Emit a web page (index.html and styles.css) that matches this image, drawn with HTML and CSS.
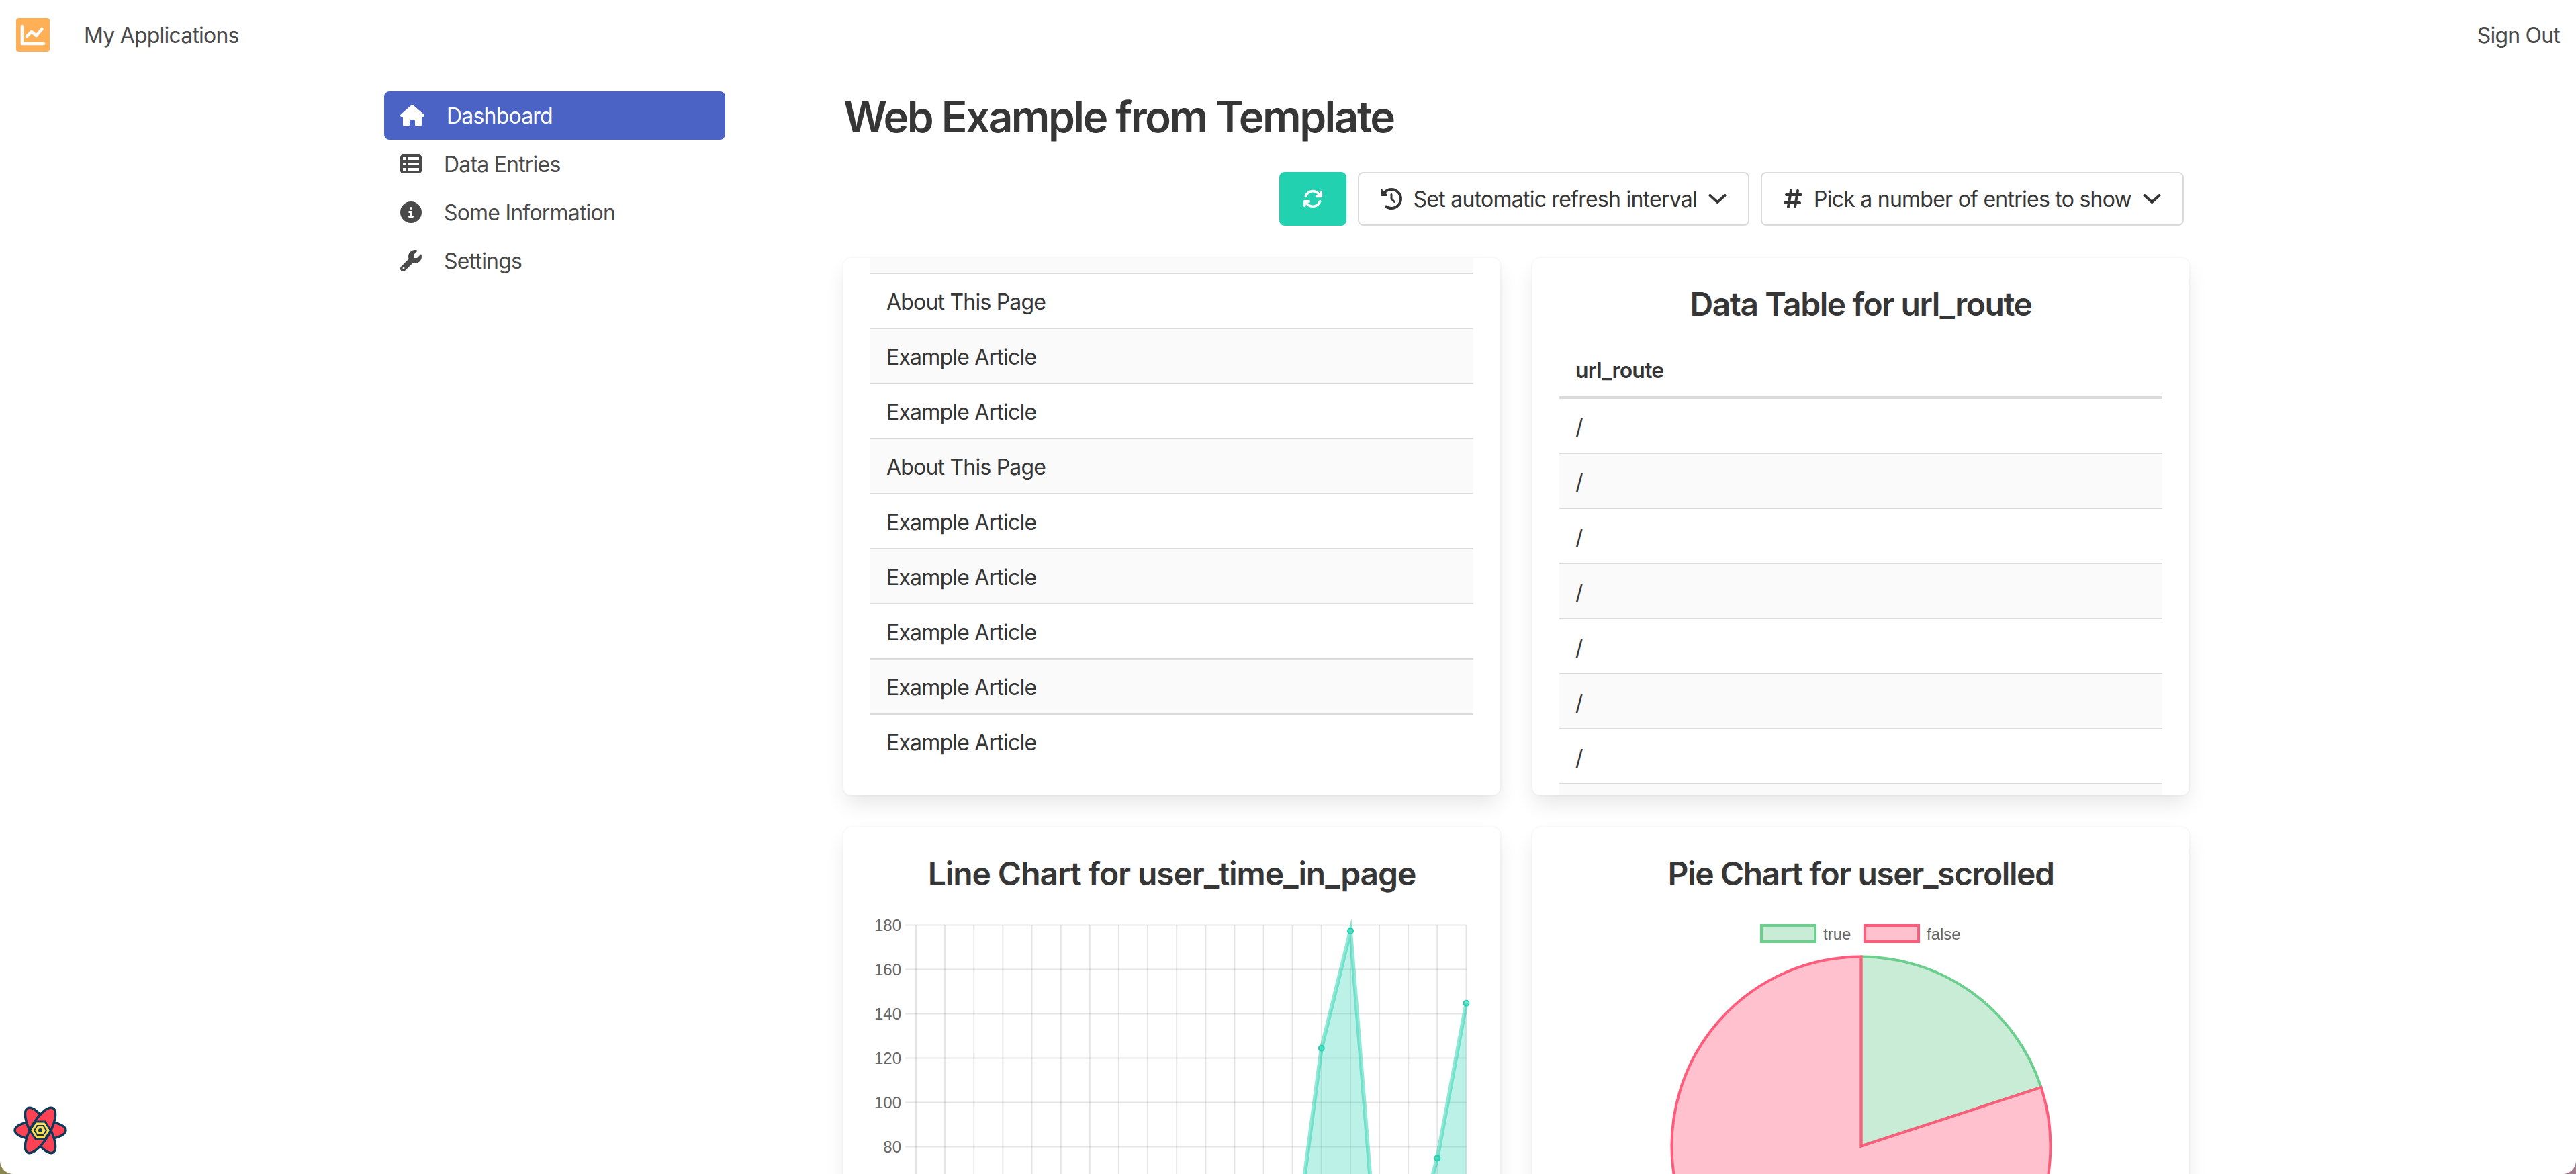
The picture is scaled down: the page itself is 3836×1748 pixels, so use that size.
FILE: index.html
```html
<!DOCTYPE html>
<html lang="en">
<head>
    <meta charset="UTF-8">
    <title>Web Example from Template</title>
    <link rel="stylesheet" href="styles.css">
</head>
<body>
<div class="app">
    <!-- Top bar -->
    <nav class="navbar">
        <div class="navbar-brand">
            <svg class="logo" viewBox="0 0 50 50">
                <rect width="50" height="50" rx="4" fill="#ffb057"/>
                <path d="M9 12V38H41" fill="none" stroke="#fff" stroke-width="4.5" stroke-linecap="round" stroke-linejoin="round"/>
                <path d="M16 27L23 20L30 26L38.500 16" fill="none" stroke="#fff" stroke-width="4.500" stroke-linecap="round" stroke-linejoin="round"/>
            </svg>
            <span>My Applications</span>
        </div>
        <span>Sign Out</span>
    </nav>

    <div class="layout">
        <!-- Sidebar -->
        <aside class="sidebar">
            <a class="menu-item active">
                <svg class="icon" viewBox="0 0 576 512"><path d="M575.8 255.5c0 18-15 32.1-32 32.1h-32l.7 160.2c0 2.7-.2 5.4-.5 8.1V472c0 22.1-17.9 40-40 40H456c-1.1 0-2.2 0-3.3-.1c-1.4 .1-2.8 .1-4.2 .1H416 392c-22.1 0-40-17.9-40-40V448 384c0-17.7-14.3-32-32-32H256c-17.7 0-32 14.3-32 32v64 24c0 22.1-17.9 40-40 40H160 128.1c-1.5 0-3-.1-4.5-.2c-1.2 .1-2.4 .2-3.6 .2H104c-22.1 0-40-17.9-40-40V360c0-.9 0-1.9 .1-2.8V287.6H32c-18 0-32-14-32-32.1c0-9 3-17 10-24L266.4 8c7-7 15-8 22-8s15 2 21 7L564.8 231.500c8 7 12 15 11 24z"/></svg>
                <span>Dashboard</span>
            </a>
            <a class="menu-item">
                <svg class="icon" viewBox="0 0 512 512"><path d="M0 96C0 60.7 28.7 32 64 32H448c35.3 0 64 28.7 64 64V416c0 35.3-28.7 64-64 64H64c-35.3 0-64-28.7-64-64V96zm64 0v64h64V96H64zm384 0H192v64H448V96zM64 224v64h64V224H64zm384 0H192v64H448V224zM64 352v64h64V352H64zm384 0H192v64H448V352z"/></svg>
                <span>Data Entries</span>
            </a>
            <a class="menu-item">
                <svg class="icon" viewBox="0 0 512 512"><path d="M256 512A256 256 0 1 0 256 0a256 256 0 1 0 0 512zM216 336h24V272H216c-13.3 0-24-10.7-24-24s10.7-24 24-24h48c13.3 0 24 10.7 24 24v88h8c13.3 0 24 10.7 24 24s-10.7 24-24 24H216c-13.3 0-24-10.7-24-24s10.7-24 24-24zm40-208a32 32 0 1 1 0 64 32 32 0 1 1 0-64z"/></svg>
                <span>Some Information</span>
            </a>
            <a class="menu-item">
                <svg class="icon" viewBox="0 0 512 512"><path d="M352 320c88.400 0 160-71.600 160-160c0-15.300-2.200-30.100-6.200-44.200c-3.100-10.800-16.400-13.200-24.300-5.300l-76.800 76.800c-3 3-7.100 4.700-11.300 4.700H336c-8.800 0-16-7.200-16-16V118.600c0-4.200 1.700-8.300 4.700-11.300l76.800-76.800c7.900-7.900 5.400-21.200-5.300-24.300C382.100 2.200 367.300 0 352 0C263.600 0 192 71.600 192 160c0 19.100 3.400 37.500 9.500 54.500L19.900 396.100C7.200 408.800 0 426.100 0 444.100C0 481.600 30.400 512 67.900 512c18 0 35.300-7.200 48-19.900L297.500 310.500c17 6.200 35.400 9.500 54.500 9.500zM80 408a24 24 0 1 1 0 48 24 24 0 1 1 0-48z"/></svg>
                <span>Settings</span>
            </a>
        </aside>

        <main class="main">
            <h1 class="page-title">Web Example from Template</h1>

            <div class="toolbar">
                <button class="btn btn-refresh">
                    <svg class="icon-sm" viewBox="0 0 512 512"><path d="M105.100 202.600c7.700-21.800 20.200-42.300 37.800-59.800c62.500-62.500 163.800-62.500 226.300 0L386.300 160H352c-17.700 0-32 14.300-32 32s14.300 32 32 32H463.500c0 0 0 0 0 0h.4c17.700 0 32-14.300 32-32V80c0-17.700-14.300-32-32-32s-32 14.300-32 32v35.200L414.400 97.600c-87.500-87.500-229.300-87.500-316.800 0C73.200 122 55.600 150.700 44.800 181.400c-5.900 16.700 2.900 34.900 19.500 40.800s34.900-2.900 40.800-19.500zM39 289.300c-5 1.500-9.800 4.200-13.700 8.200c-4 4-6.700 8.800-8.100 14c-.3 1.200-.6 2.500-.8 3.800c-.3 1.700-.4 3.400-.4 5.100V432c0 17.700 14.300 32 32 32s32-14.300 32-32V396.900l17.600 17.500 0 0c87.500 87.400 229.300 87.400 316.700 0c24.400-24.400 42.100-53.100 52.900-83.700c5.900-16.700-2.900-34.900-19.500-40.800s-34.900 2.900-40.800 19.500c-7.700 21.800-20.200 42.300-37.800 59.800c-62.500 62.500-163.800 62.500-226.300 0l-.1-.1L125.600 352H160c17.700 0 32-14.300 32-32s-14.300-32-32-32H48.400c-1.600 0-3.200 .1-4.800 .3s-3.100 .5-4.600 1z"/></svg>
                </button>
                <button class="btn">
                    <svg class="icon-sm" viewBox="0 0 512 512"><path d="M75 75L41 41C25.900 25.900 0 36.600 0 57.900V168c0 13.300 10.700 24 24 24H134.100c21.400 0 32.100-25.900 17-41l-30.800-30.800C155 85.500 203 64 256 64c106 0 192 86 192 192s-86 192-192 192c-40.800 0-78.600-12.700-109.700-34.400c-14.500-10.100-34.400-6.600-44.600 7.900s-6.600 34.400 7.900 44.600C151.200 495 201.700 512 256 512c141.400 0 256-114.600 256-256S397.400 0 256 0C185.300 0 121.300 28.700 75 75zm181 53c-13.300 0-24 10.700-24 24V256c0 6.400 2.500 12.500 7 17l72 72c9.400 9.400 24.600 9.400 33.900 0s9.400-24.600 0-33.900l-65-65V152c0-13.300-10.700-24-24-24z"/></svg>
                    <span>Set automatic refresh interval</span>
                    <svg class="chevron" viewBox="0 0 27 14"><path d="M2.500 2L13.500 12L24.500 2"/></svg>
                </button>
                <button class="btn">
                    <svg class="icon-hash" viewBox="0 0 448 512"><path d="M181.300 32.400c17.400 2.900 29.200 19.400 26.300 36.800L197.800 128h95.100l11.500-69.300c2.900-17.400 19.400-29.200 36.800-26.300s29.200 19.400 26.300 36.800L357.800 128H416c17.700 0 32 14.300 32 32s-14.300 32-32 32H347.100L325.800 320H384c17.700 0 32 14.300 32 32s-14.300 32-32 32H315.100l-11.500 69.300c-2.900 17.400-19.400 29.200-36.800 26.300s-29.200-19.400-26.300-36.800l9.800-58.700H155.100l-11.500 69.300c-2.900 17.400-19.400 29.200-36.800 26.300s-29.200-19.400-26.300-36.800L90.200 384H32c-17.700 0-32-14.300-32-32s14.300-32 32-32h68.900l21.300-128H64c-17.700 0-32-14.300-32-32s14.300-32 32-32h68.900l11.500-69.300c2.900-17.400 19.400-29.200 36.800-26.300zM187.100 192L165.800 320h95.100l21.300-128H187.100z"/></svg>
                    <span>Pick a number of entries to show</span>
                    <svg class="chevron" viewBox="0 0 27 14"><path d="M2.500 2L13.500 12L24.500 2"/></svg>
                </button>
            </div>

            <div class="cards">
                <!-- Scrolled to the end of the list -->
                <section class="card card-scrolled">
                    <table class="table">
                        <tbody>
                            <tr><td>&nbsp;</td></tr>
                            <tr><td>About This Page</td></tr>
                            <tr><td>Example Article</td></tr>
                            <tr><td>Example Article</td></tr>
                            <tr><td>About This Page</td></tr>
                            <tr><td>Example Article</td></tr>
                            <tr><td>Example Article</td></tr>
                            <tr><td>Example Article</td></tr>
                            <tr><td>Example Article</td></tr>
                            <tr><td>Example Article</td></tr>
                        </tbody>
                    </table>
                </section>

                <section class="card">
                    <h2 class="card-title">Data Table for url_route</h2>
                    <table class="table table-route">
                        <thead>
                            <tr><th>url_route</th></tr>
                        </thead>
                        <tbody>
                            <tr><td>/</td></tr>
                            <tr><td>/</td></tr>
                            <tr><td>/</td></tr>
                            <tr><td>/</td></tr>
                            <tr><td>/</td></tr>
                            <tr><td>/</td></tr>
                            <tr><td>/</td></tr>
                            <tr><td>&nbsp;</td></tr>
                        </tbody>
                    </table>
                </section>

                <section class="card">
                    <h2 class="card-title title-wide">Line Chart for user_time_in_page</h2>
                    <svg class="chart" viewBox="0 0 898 400">
                        <path class="grid" d="M68 19.600V520M111.100 19.600V520M154.300 19.600V520M197.400 19.600V520M240.500 19.600V520M283.700 19.600V520M326.800 19.600V520M369.900 19.600V520M413 19.600V520M456.200 19.600V520M499.300 19.600V520M542.400 19.600V520M585.600 19.600V520M628.700 19.600V520M671.800 19.600V520M715 19.600V520M758.100 19.600V520M801.200 19.600V520M844.300 19.600V520M887.500 19.600V520"/>
                        <path class="grid" d="M52 19.600H887.500M52 85.600H887.500M52 151.600H887.500M52 217.600H887.500M52 283.600H887.500M52 349.600H887.500"/>
                        <g class="tick">
                            <text x="46" y="28">180</text>
                            <text x="46" y="94">160</text>
                            <text x="46" y="160">140</text>
                            <text x="46" y="226">120</text>
                            <text x="46" y="292">100</text>
                            <text x="46" y="358">80</text>
                        </g>
                        <path class="area" d="M628.700 613.600L628.700 528L671.800 202.700L715 28L758.100 565L801.200 526L844.300 366.400L887.500 135.700L887.500 613.600Z"/>
                        <path class="line" d="M628.700 528L671.800 202.700L715 28L758.100 565L801.200 526L844.300 366.400L887.500 135.700"/>
                        <circle class="point" cx="671.800" cy="202.700" r="4"/>
                        <circle class="point" cx="715" cy="28" r="4"/>
                        <circle class="point" cx="844.300" cy="366.400" r="4"/>
                        <circle class="point" cx="887.500" cy="135.700" r="4"/>
                    </svg>
                </section>

                <section class="card">
                    <h2 class="card-title">Pie Chart for user_scrolled</h2>
                    <svg class="chart" viewBox="0 0 898 400">
                        <rect class="slice-true" x="301" y="20" width="80" height="24"/>
                        <text class="legend" x="393" y="41">true</text>
                        <rect class="slice-false" x="455" y="20" width="80" height="24"/>
                        <text class="legend" x="547" y="41">false</text>
                        <path class="slice-true" d="M449.500 348.500V66.500A282 282 0 0 1 717.500 260.900Z"/>
                        <path class="slice-false" d="M449.500 348.500L717.500 260.900A282 282 0 1 1 449.500 66.500Z"/>
                    </svg>
                </section>
            </div>
        </main>
    </div>

    <!-- Devtools toggle -->
    <svg class="devtools" viewBox="0 0 80 72">
        <g fill="#ff4154" stroke="#0b3a5b" stroke-width="3.500">
            <ellipse cx="40" cy="36" rx="38" ry="14"/>
            <ellipse cx="40" cy="36" rx="38" ry="14" transform="rotate(60 40 36)"/>
            <ellipse cx="40" cy="36" rx="38" ry="14" transform="rotate(120 40 36)"/>
        </g>
        <path d="M33 23H47L55.500 36L47 49H33L24.500 36Z" fill="#ffd94c" stroke="#0b3a5b" stroke-width="3"/>
        <path d="M35.500 29H44.500L49 36L44.500 43H35.500L31 36Z" fill="#ffd94c" stroke="#0b3a5b" stroke-width="2"/>
        <circle cx="40" cy="36" r="3" fill="#0b3a5b"/>
    </svg>
</div>
</body>
</html>
```

FILE: styles.css
```css
* {
    box-sizing: border-box;
}

html {
    background: linear-gradient(90deg, #8a8850 50%, #a07c8c 50%);
}

body {
    margin: 0;
    height: 1748px;
    overflow: hidden;
    font-family: Inter, "Liberation Sans", sans-serif;
    font-size: 32px;
    line-height: 48px;
    letter-spacing: -0.8px;
    color: #4a4a4a;
}

.app {
    position: relative;
    height: 1748px;
    overflow: hidden;
    background-color: #fff;
    border-radius: 0 0 20px 20px;
}

/* Top bar */
.navbar {
    display: flex;
    align-items: center;
    justify-content: space-between;
    height: 104px;
    padding: 2px 24px 0;
}

.navbar-brand {
    display: flex;
    align-items: center;
    gap: 51px;
}

.logo {
    width: 50px;
    height: 50px;
    margin-top: -2px;
}

.layout {
    display: flex;
    gap: 176px;
    margin-top: 32px;
    margin-left: 572px;
}

/* Sidebar */
.sidebar {
    width: 508px;
    flex-shrink: 0;
}

.menu-item {
    display: flex;
    align-items: center;
    gap: 33px;
    height: 72px;
    padding-left: 24px;
    border-radius: 8px;
}

.menu-item span {
    padding-top: 2px;
}

.menu-item.active {
    background-color: #4b63c4;
    color: #fff;
}

.icon {
    height: 32px;
    fill: currentColor;
}

/* Main column */
.main {
    width: 2004px;
    flex-shrink: 0;
}

.page-title {
    margin: 0 0 46px;
    padding-top: 2px;
    font-size: 64px;
    line-height: 72px;
    font-weight: 600;
    letter-spacing: -2.56px;
    color: #363636;
}

.toolbar {
    display: flex;
    justify-content: flex-end;
    gap: 17px;
    padding-right: 8px;
    margin-bottom: 48px;
}

.btn {
    display: flex;
    align-items: center;
    height: 80px;
    padding: 0 32px;
    background-color: #fff;
    border: 2px solid #dbdbdb;
    border-radius: 8px;
    font: inherit;
    letter-spacing: -0.75px;
    color: #363636;
}

.btn span {
    margin: 2px 17px 0;
}

.btn-refresh {
    width: 100px;
    justify-content: center;
    background-color: #22d1b0;
    border-color: transparent;
    color: #fff;
}

.icon-sm {
    width: 32px;
    height: 32px;
    fill: currentColor;
}

.btn-refresh .icon-sm {
    width: 30px;
}

.icon-hash {
    width: 28px;
    height: 32px;
    fill: currentColor;
}

.chevron {
    width: 27px;
    height: 14px;
    fill: none;
    stroke: currentColor;
    stroke-width: 4;
    stroke-linecap: round;
    stroke-linejoin: round;
}

/* Cards */
.cards {
    display: grid;
    grid-template-columns: 978px 978px;
    gap: 48px;
}

.card {
    height: 800px;
    padding: 40px 40px 0;
    overflow: hidden;
    background-color: #fff;
    border-radius: 12px;
    box-shadow: 0 16px 32px -4px rgba(10, 10, 10, 0.1), 0 0 0 2px rgba(10, 10, 10, 0.02);
    color: #363636;
}

.card-scrolled {
    display: flex;
    flex-direction: column;
    justify-content: flex-end;
    padding: 0 40px 40px;
}

.card-title {
    margin: 0 0 32px;
    padding-top: 2px;
    height: 54px;
    font-size: 48px;
    line-height: 54px;
    font-weight: 600;
    letter-spacing: -1.44px;
    text-align: center;
    color: #363636;
}

.title-wide {
    letter-spacing: -1.1px;
}

.table {
    width: 100%;
    flex-shrink: 0;
    border-collapse: collapse;
}

.table th,
.table td {
    padding: 18px 24px 14px;
    text-align: left;
    border-bottom: 2px solid #dbdbdb;
}

.table th {
    border-bottom-width: 4px;
    font-weight: 600;
}

.table tbody tr:last-child td {
    border-bottom: 0;
}

.table tbody tr:nth-child(odd) {
    background-color: #fafafa;
}

.table-route tbody tr:nth-child(odd) {
    background-color: transparent;
}

.table-route tbody tr:nth-child(even) {
    background-color: #fafafa;
}

/* Charts */
.chart {
    display: block;
    width: 898px;
    height: 400px;
}

.grid {
    fill: none;
    stroke: rgba(0, 0, 0, 0.1);
    stroke-width: 2;
}

.tick text {
    font-family: "Liberation Sans", sans-serif;
    font-size: 24px;
    letter-spacing: 0;
    fill: #666;
    text-anchor: end;
}

.legend {
    font-family: "Liberation Sans", sans-serif;
    font-size: 24px;
    letter-spacing: 0;
    fill: #666;
}

.area {
    fill: rgba(34, 209, 176, 0.3);
}

.line {
    fill: none;
    stroke: rgba(34, 209, 176, 0.5);
    stroke-width: 6;
    stroke-miterlimit: 10;
}

.point {
    fill: rgba(34, 209, 176, 0.5);
    stroke: #22d1b0;
    stroke-width: 2;
}

.slice-true {
    fill: rgba(75, 192, 120, 0.3);
    stroke: #6ccf8e;
    stroke-width: 4;
}

.slice-false {
    fill: rgba(255, 99, 132, 0.4);
    stroke: #ff5c7c;
    stroke-width: 4;
}

/* Devtools toggle */
.devtools {
    position: absolute;
    left: 20px;
    bottom: 29px;
    width: 80px;
    height: 72px;
}
```
